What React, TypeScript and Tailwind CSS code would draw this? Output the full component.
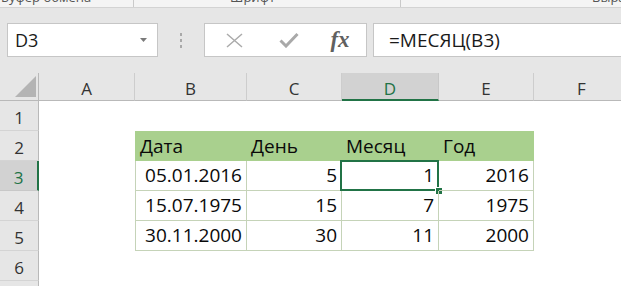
import React from "react";

const colLetters = ["A", "B", "C", "D", "E", "F"];

const tableRows: string[][] = [
  ["Дата", "День", "Месяц", "Год"],
  ["05.01.2016", "5", "1", "2016"],
  ["15.07.1975", "15", "7", "1975"],
  ["30.11.2000", "30", "11", "2000"],
];

function SheetCell({ row, col }: { row: number; col: number }) {
  const inTable = row >= 2 && row <= 5 && col >= 1 && col <= 4;
  if (!inTable) {
    return <div className="bg-white" />;
  }
  const value = tableRows[row - 2][col - 1];
  const isHeader = row === 2;
  const selected = row === 3 && col === 3;
  if (isHeader) {
    return (
      <div
        className={
          "relative flex items-end bg-[#a9d08e] pl-[4px] pb-[3px] text-[19px] leading-[24px] text-[#0a0a0a] " +
          (col === 1 ? "border-l border-[#a9d08e]" : "")
        }
      >
        {value}
      </div>
    );
  }
  return (
    <div
      className={
        "relative flex items-end justify-end border-r border-b border-[#c5d3b8] pr-[4px] pb-[3px] text-[19px] leading-[24px] text-[#0a0a0a] " +
        (col === 1 ? "border-l" : "")
      }
    >
      {value}
      {selected && (
        <>
          <div className="pointer-events-none absolute left-[-2px] top-[-1px] right-[-1px] bottom-[-1px] border-2 border-[#217346]" />
          <div className="absolute right-[-4px] bottom-[-4px] h-[6px] w-[6px] bg-[#217346] outline outline-1 outline-white" />
        </>
      )}
    </div>
  );
}

export default function App() {
  const rows = [1, 2, 3, 4, 5, 6, 7];
  return (
    <div className="h-[286px] w-[621px] overflow-hidden bg-white font-['Open_Sans',sans-serif] text-[#222]">
      {/* Ribbon bottom strip */}
      <div className="relative flex h-[8px] overflow-hidden border-b border-[#d3d3d3] bg-[#f4f4f4] text-[13px] leading-[13px] text-[#555]">
        <div className="flex w-[134px] shrink-0 border-r border-[#cacaca]">
          <span className="mt-[-9px] whitespace-nowrap pl-[1px]">Буфер обмена</span>
        </div>
        <div className="flex w-[267px] shrink-0 border-r border-[#cacaca]">
          <span className="mt-[-9px] whitespace-nowrap pl-[96px]">Шрифт</span>
        </div>
        <div className="flex flex-1">
          <span className="mt-[-9px] whitespace-nowrap pl-[191px]">Выравнивание</span>
        </div>
      </div>

      {/* Formula bar */}
      <div className="flex h-[65px] items-start bg-[#e6e6e6] pt-[15px] pl-[7px]">
        <div className="flex h-[34px] w-[151px] shrink-0 items-center justify-between border border-[#c6c6c6] bg-white pl-[7px] pr-[10px]">
          <span className="text-[18px] leading-[20px] text-[#1a1a1a]">D3</span>
          <svg width="7" height="4" viewBox="0 0 7 4">
            <path d="M0 0 L7 0 L3.5 4 Z" fill="#7a7a7a" />
          </svg>
        </div>
        <div className="flex h-[34px] w-[46px] shrink-0 flex-col items-center justify-center gap-[3px] pr-[1px]">
          <span className="block h-[3px] w-[2px] bg-[#a9a9a9]" />
          <span className="block h-[3px] w-[2px] bg-[#a9a9a9]" />
          <span className="block h-[3px] w-[2px] bg-[#a9a9a9]" />
        </div>
        <div className="flex h-[34px] w-[163px] shrink-0 items-center border border-[#c6c6c6] bg-white">
          <div className="flex w-[56px] justify-center pl-[2px]">
            <svg width="17" height="15" viewBox="0 0 17 15">
              <path d="M1 1 L16 14 M16 1 L1 14" stroke="#ababab" strokeWidth="1.5" fill="none" />
            </svg>
          </div>
          <div className="flex w-[55px] justify-center">
            <svg width="20" height="16" viewBox="0 0 20 16">
              <path d="M1.5 8.5 L7 14 L18.5 2" stroke="#a9a9a9" strokeWidth="3" fill="none" />
            </svg>
          </div>
          <div className="flex w-[48px] justify-center">
            <span className="font-['Liberation_Serif',serif] text-[23px] leading-[24px] font-semibold italic text-[#606060]">fx</span>
          </div>
        </div>
        <div className="ml-[6px] mr-[-10px] flex h-[34px] flex-1 items-center border border-[#c6c6c6] bg-white pl-[15px]">
          <span className="text-[19px] leading-[22px] text-[#1a1a1a]">=МЕСЯЦ(B3)</span>
        </div>
      </div>

      {/* Grid */}
      <div className="grid grid-cols-[39px_96px_112px_95px_97px_95px_96px] grid-rows-[28px_30px_30px_30px_30px_30px_30px_30px]">
        <div className="flex items-end justify-end border-r border-b border-[#b9b9b9] bg-[#e6e6e6] pr-[2px] pb-[3px]">
          <svg width="21" height="21" viewBox="0 0 21 21">
            <path d="M0 21 L21 21 L21 0 Z" fill="#b4b4b4" />
          </svg>
        </div>
        {colLetters.map((c) => {
          const sel = c === "D";
          return (
            <div
              key={c}
              className={
                "flex items-center justify-center pt-[5px] text-[17px] leading-[20px] " +
                (sel
                  ? "border-r border-r-[#c8c8c8] border-b-2 border-b-[#217346] bg-[#d2d2d2] text-[#217346]"
                  : "border-r border-b border-r-[#cdcdcd] border-b-[#b9b9b9] bg-[#e6e6e6] text-[#333]")
              }
            >
              {c}
            </div>
          );
        })}
        {rows.map((r) => {
          const sel = r === 3;
          return (
            <React.Fragment key={r}>
              <div
                className={
                  "flex items-center justify-center pt-[5px] text-[17px] leading-[20px] " +
                  (sel
                    ? "border-b border-b-[#c8c8c8] border-r-2 border-r-[#217346] bg-[#d2d2d2] text-[#217346]"
                    : "border-b border-r border-b-[#d4d4d4] border-r-[#b9b9b9] bg-[#e6e6e6] text-[#333]")
                }
              >
                {r}
              </div>
              {colLetters.map((_, ci) => (
                <SheetCell key={ci} row={r} col={ci} />
              ))}
            </React.Fragment>
          );
        })}
      </div>
    </div>
  );
}
